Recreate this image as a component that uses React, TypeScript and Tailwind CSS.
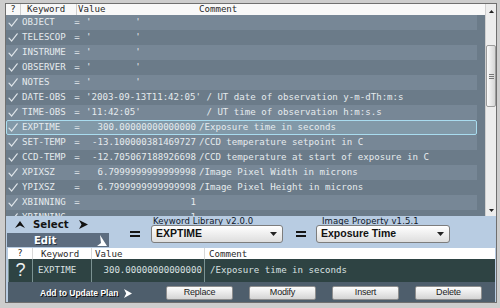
import React from 'react'

type Row = { k: string; s?: string; n?: string; c?: string }

const blank = "'        '"

const rows: Row[] = [
  { k: 'OBJECT', s: blank },
  { k: 'TELESCOP', s: blank },
  { k: 'INSTRUME', s: blank },
  { k: 'OBSERVER', s: blank },
  { k: 'NOTES', s: blank },
  { k: 'DATE-OBS', s: "'2003-09-13T11:42:05' / UT date of observation y-m-dTh:m:s" },
  { k: 'TIME-OBS', s: "'11:42:05'            / UT time of observation h:m:s.s" },
  { k: 'EXPTIME', n: '300.00000000000000', c: '/Exposure time in seconds' },
  { k: 'SET-TEMP', n: '-13.100000381469727', c: '/CCD temperature setpoint in C' },
  { k: 'CCD-TEMP', n: '-12.705067188926698', c: '/CCD temperature at start of exposure in C' },
  { k: 'XPIXSZ', n: '6.7999999999999998', c: '/Image Pixel Width in microns' },
  { k: 'YPIXSZ', n: '6.7999999999999998', c: '/Image Pixel Height in microns' },
  { k: 'XBINNING', n: '1' },
  { k: 'YBINNING', n: '1' },
]

const mono = "font-['DejaVu_Sans_Mono',monospace] text-[9.1px]"

// ── check mark ─────────────────────────────────────────────
function Check() {
  return (
    <svg width="10" height="9" viewBox="0 0 10 9" fill="none">
      <path d="M1 5.2 L3.6 8 L9.2 0.8" stroke="#dfe5ea" strokeWidth="1.2" strokeLinecap="round" />
    </svg>
  )
}

function KeywordRow({ row, i }: { row: Row; i: number }) {
  const selected = row.k === 'EXPTIME'
  const bg = selected
    ? 'bg-[#8299a8] border border-[#a9dcef] rounded-[2px]'
    : i % 2 === 0
      ? 'bg-[#778796] border border-transparent'
      : 'border border-transparent'
  return (
    <div className={`w-[471px] h-[15px] shrink-0 flex items-center text-[#e6ebee] ${mono} ${bg}`}>
      <div className="w-[15px] pl-[1px] flex items-center">
        <Check />
      </div>
      <div className="w-[51px] whitespace-pre">{row.k}</div>
      <div className="w-[8px] text-center">=</div>
      <div className="w-[5px]" />
      {row.s !== undefined ? (
        <div className="whitespace-pre">{row.s}</div>
      ) : (
        <>
          <div className="w-[110px] text-right whitespace-pre">{row.n}</div>
          <div className="ml-[3px] whitespace-pre">{row.c}</div>
        </>
      )}
    </div>
  )
}

function Scrollbar() {
  return (
    <div className="w-[11px] bg-[#ededed] border-l border-[#d0d0d0] flex flex-col items-center">
      <div className="h-[14px] flex items-center justify-center">
        <svg width="5" height="3" viewBox="0 0 5 3"><polygon points="0,3 2.5,0 5,3" fill="#222" /></svg>
      </div>
      <div className="mt-[27px] w-[10px] h-[62px] rounded-[2px] border border-[#9c9c9c]
        bg-gradient-to-r from-[#fbfbfb] to-[#d6d6d6] flex flex-col items-center justify-center gap-[1px]">
        <div className="w-[5px] h-px bg-[#777]" />
        <div className="w-[5px] h-px bg-[#777]" />
        <div className="w-[5px] h-px bg-[#777]" />
      </div>
      <div className="flex-1" />
      <div className="h-[12px] flex items-center justify-center">
        <svg width="5" height="3" viewBox="0 0 5 3"><polygon points="0,0 5,0 2.5,3" fill="#222" /></svg>
      </div>
    </div>
  )
}

function Dropdown({ label, value, labelPad }: { label: string; value: string; labelPad: string }) {
  return (
    <div className="flex flex-col">
      <div className={`h-[9px] leading-[9px] pt-[1px] text-[8.5px] tracking-[0.1px] text-[#10182a] font-['DejaVu_Sans',sans-serif] ${labelPad}`}>
        {label}
      </div>
      <div className="h-[18px] rounded-[3px] border border-[#7d7d7d] bg-gradient-to-b from-white to-[#dedede]
        flex items-center pl-[4px] pr-[5px]">
        <span className="text-[10.5px] font-bold text-[#111] font-['Liberation_Sans',Arial,sans-serif]">{value}</span>
        <svg className="ml-auto" width="7" height="4" viewBox="0 0 7 4"><polygon points="0,0 7,0 3.5,4" fill="#222" /></svg>
      </div>
    </div>
  )
}

function Equals({ ml }: { ml: string }) {
  return (
    <div className={`${ml} mt-[15px] w-[10px] flex flex-col gap-[2px]`}>
      <div className="h-[2px] bg-[#151515]" />
      <div className="h-[2px] bg-[#151515]" />
    </div>
  )
}

function Btn({ children }: { children: React.ReactNode }) {
  return (
    <div className="w-[67px] h-[14px] rounded-[2px] border border-[#8e8e8e] bg-gradient-to-b from-[#fdfdfd] to-[#d4d4d4]
      flex items-center justify-center text-[9px] tracking-[-0.2px] text-[#1c1c1c] font-['Liberation_Sans',Arial,sans-serif]">
      {children}
    </div>
  )
}

export default function App() {
  return (
    <div className="w-[500px] h-[308px] bg-[#cdcdcd] pt-[3px] pl-[5px] pr-[3px] pb-[5px]">
      <div className="w-full h-full border border-[#6f6f6f] flex flex-col bg-[#b8cce2]">

        {/* Keyword list */}
        <div className="h-[212px] flex">
          <div className="flex-1 flex flex-col">
            {/* header */}
            <div className={`h-[11px] bg-[#f8f8f8] flex items-center text-[#2a2a2a] ${mono}`}>
              <div className="w-[14px] text-center">?</div>
              <div className="w-px h-full bg-[#cfcfcf]" />
              <div className="w-[55px] pl-[6px]">Keyword</div>
              <div className="w-px h-full bg-[#cfcfcf]" />
              <div className="w-[122px] pl-[1px]">Value</div>
              <div>Comment</div>
            </div>
            {/* rows */}
            <div className="h-[201px] overflow-hidden bg-[#6b7b89] flex flex-col">
              {rows.map((r, i) => <KeywordRow key={r.k} row={r} i={i} />)}
            </div>
          </div>
          <Scrollbar />
        </div>

        {/* Edit panel */}
        <div className="flex-1 flex flex-col">
          <div className="h-[32px] flex items-start">
            <div className="ml-[1px] w-[102px] flex flex-col">
              <div className="h-[17px] flex items-center">
                <svg className="ml-[8px]" width="10" height="7" viewBox="0 0 10 7">
                  <polygon points="0,7 5,0 10,7 5,4.5" fill="#121212" />
                </svg>
                <span className="ml-[8px] text-[10.2px] font-bold text-[#141414] font-['DejaVu_Sans',sans-serif]">Select</span>
                <svg className="ml-[10px]" width="9" height="9" viewBox="0 0 9 9">
                  <polygon points="0,0 9,4.5 0,9 2.5,4.5" fill="#121212" />
                </svg>
              </div>
              <div className="h-[14px] bg-[#5d6d80] flex items-center">
                <span className="ml-[27px] text-[10px] font-bold text-white font-['DejaVu_Sans',sans-serif] [text-shadow:1px_1px_0_#2a3440]">
                  Edit
                </span>
                <svg className="ml-auto mr-[2px]" width="10" height="11" viewBox="0 0 10 11">
                  <polygon points="3,0 10,11 0,11 4,8" fill="#ffffff" />
                </svg>
              </div>
            </div>
            <Equals ml="ml-[21px]" />
            <div className="ml-[11px] w-[132px]">
              <Dropdown label="Keyword Library v2.0.0" value="EXPTIME" labelPad="pl-[2px]" />
            </div>
            <Equals ml="ml-[13px]" />
            <div className="ml-[10px] w-[134px]">
              <Dropdown label="Image Property v1.5.1" value="Exposure Time" labelPad="pl-[6px]" />
            </div>
          </div>

          {/* selected keyword table */}
          <div className="ml-[2px] mr-[1px] flex flex-col">
            <div className={`h-[11px] bg-white flex items-center text-[#2a2a2a] ${mono}`}>
              <div className="w-[24px] text-center">?</div>
              <div className="w-[59px] h-full border-l border-[#d8d8d8] pl-[8px]">Keyword</div>
              <div className="w-[113px] h-full border-l border-[#d8d8d8] pl-[3px]">Value</div>
              <div className="flex-1 h-full border-l border-[#d8d8d8] pl-[4px]">Comment</div>
            </div>
            <div className={`h-[23px] bg-[#2e4343] flex text-[#d9e1e1] ${mono} border-l border-[#7b9292]`}>
              <div className="w-[23px] flex items-center justify-center text-[18px] font-['Liberation_Sans',Arial,sans-serif] text-[#eef2f2]">?</div>
              <div className="w-[59px] border-l border-[#7b9292] flex items-center pl-[5px]">EXPTIME</div>
              <div className="w-[113px] border-l border-[#7b9292] flex items-center justify-end pr-[2px] whitespace-pre">300.00000000000000</div>
              <div className="flex-1 border-l border-[#7b9292] flex items-center pl-[5px] whitespace-pre">/Exposure time in seconds</div>
            </div>
            <div className="h-[20px] bg-[#4e5e6c] flex items-center pt-[2px]">
              <span className="ml-[32px] text-[8.5px] font-bold text-white font-['Liberation_Sans',Arial,sans-serif] [text-shadow:1px_1px_0_#111]">
                Add to Update Plan
              </span>
              <svg className="ml-[6px]" width="8" height="9" viewBox="0 0 8 9">
                <polygon points="0,0 8,4.5 0,9 2.2,4.5" fill="#ffffff" />
              </svg>
              <div className="ml-auto mr-[13px] flex gap-[16px]">
                <Btn>Replace</Btn>
                <Btn>Modify</Btn>
                <Btn>Insert</Btn>
                <Btn>Delete</Btn>
              </div>
            </div>
          </div>
        </div>
      </div>
    </div>
  )
}
